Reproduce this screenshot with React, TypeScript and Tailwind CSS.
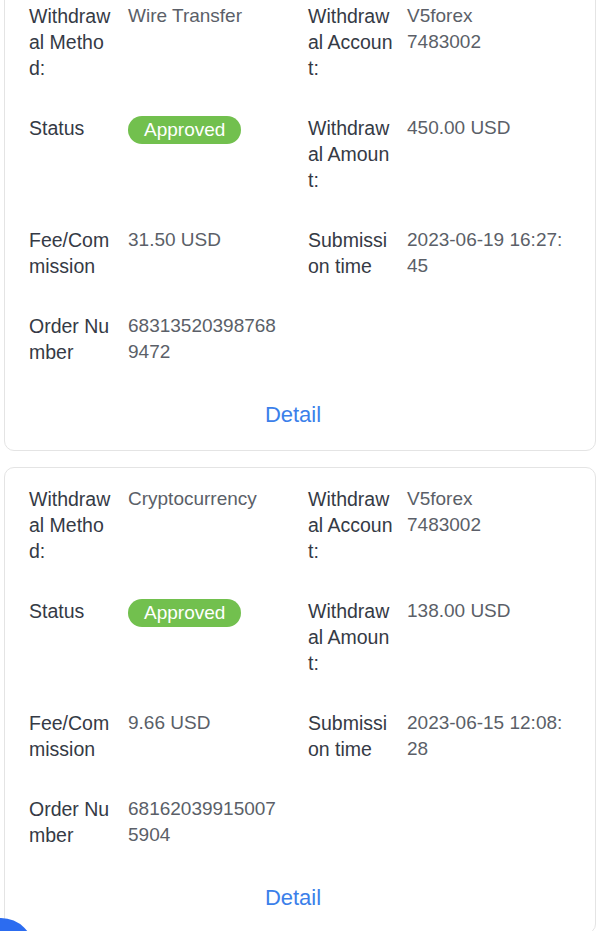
import React from 'react';

// One field of a withdrawal record: label lines and value lines
interface Field {
  label: string[];
  value?: string[];
  badge?: string;
}

interface Record {
  rows: [Field, Field | null][];
}

const records: Record[] = [
  {
    rows: [
      [
        { label: ['Withdraw', 'al Metho', 'd:'], value: ['Wire Transfer'] },
        { label: ['Withdraw', 'al Accoun', 't:'], value: ['V5forex', '7483002'] },
      ],
      [
        { label: ['Status'], badge: 'Approved' },
        { label: ['Withdraw', 'al Amoun', 't:'], value: ['450.00 USD'] },
      ],
      [
        { label: ['Fee/Com', 'mission'], value: ['31.50 USD'] },
        { label: ['Submissi', 'on time'], value: ['2023-06-19 16:27:', '45'] },
      ],
      [{ label: ['Order Nu', 'mber'], value: ['68313520398768', '9472'] }, null],
    ],
  },
  {
    rows: [
      [
        { label: ['Withdraw', 'al Metho', 'd:'], value: ['Cryptocurrency'] },
        { label: ['Withdraw', 'al Accoun', 't:'], value: ['V5forex', '7483002'] },
      ],
      [
        { label: ['Status'], badge: 'Approved' },
        { label: ['Withdraw', 'al Amoun', 't:'], value: ['138.00 USD'] },
      ],
      [
        { label: ['Fee/Com', 'mission'], value: ['9.66 USD'] },
        { label: ['Submissi', 'on time'], value: ['2023-06-15 12:08:', '28'] },
      ],
      [{ label: ['Order Nu', 'mber'], value: ['68162039915007', '5904'] }, null],
    ],
  },
];

const FieldCell: React.FC<{ field: Field | null; wide?: boolean }> = ({ field, wide }) => {
  if (!field) return <div className={wide ? 'w-[279px]' : 'flex-1'} />;
  return (
    <div className={`flex ${wide ? 'w-[279px]' : 'flex-1'}`}>
      <div className="w-[99px] shrink-0 text-[19.5px] leading-[26px] text-[#353a45]">
        {field.label.map((l, i) => (
          <div key={i} className="whitespace-nowrap">{l}</div>
        ))}
      </div>
      <div className="flex-1 text-[19px] leading-[26px] text-[#5b5f68]">
        {field.badge ? (
          <span className="mt-[1px] inline-flex h-[28px] items-center rounded-full bg-[#72c04e] px-[16px] text-[19px] text-white">
            {field.badge}
          </span>
        ) : (
          field.value?.map((v, i) => (
            <div key={i} className="whitespace-nowrap">{v}</div>
          ))
        )}
      </div>
    </div>
  );
};

export default function App() {
  return (
    <div
      className="relative h-[931px] w-[600px] overflow-hidden bg-white"
      style={{ fontFamily: '"Liberation Sans", Arial, sans-serif' }}
    >
      <div className="-mt-[16px] flex flex-col gap-[16px] px-[4px]">
        {records.map((rec, idx) => (
          <div
            key={idx}
            className="rounded-[10px] border-[1.5px] border-[#e4e4e4] bg-white pl-[24px] pr-[20px] pt-[18px] pb-[22px]"
          >
            <div className="flex flex-col gap-[34px]">
              {rec.rows.map((row, r) => (
                <div key={r} className="flex">
                  <FieldCell field={row[0]} wide />
                  <FieldCell field={row[1]} />
                </div>
              ))}
            </div>
            <div className="mt-[37px] pr-[18px] text-center text-[22px] leading-[26px] text-[#3b80ea]">
              Detail
            </div>
          </div>
        ))}
      </div>

      {/* floating button peeking in at the bottom left */}
      <div className="absolute left-[-32px] top-[918px] h-[66px] w-[66px] rounded-full bg-[#2c6cf0]" />
    </div>
  );
}
